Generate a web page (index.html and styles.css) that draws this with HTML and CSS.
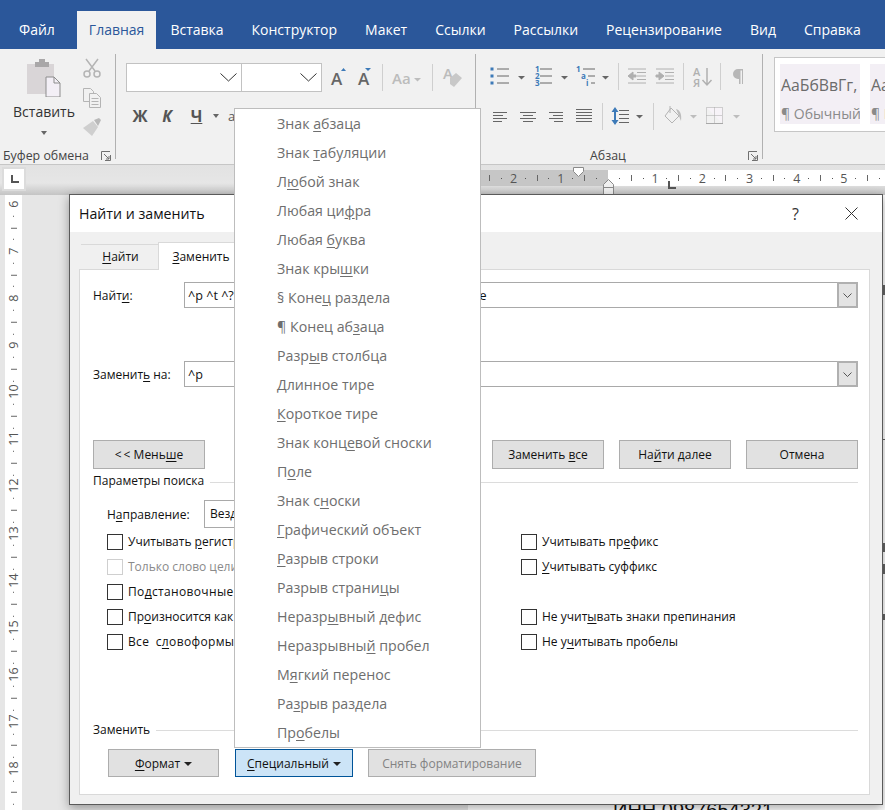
FILE: index.html
```html
<!DOCTYPE html>
<html lang="ru">
<head>
    <meta charset="UTF-8">
    <meta name="viewport" content="width=device-width, initial-scale=1.0">
    <title>Найти и заменить</title>
    <link rel="stylesheet" href="styles.css">
</head>
<body>
    <div class="app">
        <!-- верхние вкладки -->
        <nav class="tabs">
            <span class="tab tab-file">Файл</span>
            <span class="tab active">Главная</span>
            <span class="tab">Вставка</span>
            <span class="tab">Конструктор</span>
            <span class="tab">Макет</span>
            <span class="tab">Ссылки</span>
            <span class="tab">Рассылки</span>
            <span class="tab">Рецензирование</span>
            <span class="tab">Вид</span>
            <span class="tab">Справка</span>
        </nav>

        <!-- лента -->
        <section class="ribbon">
            <div class="group group-clip">
                <div class="clip-body">
                    <div class="paste">
                        <svg width="34" height="38" viewBox="0 0 34 38">
                            <path d="M0 5h27v30H0z" fill="#d9d5d7"/>
                            <path d="M8 3h4V0h6v3h4v5H8z" fill="#a9a7a8"/>
                            <path d="M19 18h8l6 6v14H19z" fill="#f3eff6" stroke="#8d8d8d"/>
                            <path d="M27 18v6h6" fill="none" stroke="#8d8d8d"/>
                        </svg>
                        <span class="paste-label">Вставить</span>
                        <span class="caret"></span>
                    </div>
                    <div class="clip-tools">
                        <svg width="18" height="20" viewBox="0 0 18 20" fill="none" stroke="#b4b4b4" stroke-width="1.5">
                            <path d="M3 1l9 12M15 1L6 13"/>
                            <circle cx="4" cy="16" r="3"/>
                            <circle cx="14" cy="16" r="3"/>
                        </svg>
                        <svg width="18" height="20" viewBox="0 0 18 20" fill="#f1f1f1" stroke="#b4b4b4">
                            <path d="M.5.5h7l3 3v10H.5z"/>
                            <path d="M6.5 5.5h7l4 4v10h-11z"/>
                            <path d="M8.5 10.500h7M8.500 13.500h7M8.500 16.500h7"/>
                        </svg>
                        <svg width="18" height="18" viewBox="0 0 18 18">
                            <path d="M11 2l5-2 2 2-3 6z" fill="#b9b9b9"/>
                            <path d="M10 3l5 6-6 9-9-8z" fill="#cfcfcf"/>
                        </svg>
                    </div>
                </div>
                <div class="group-label">
                    <span>Буфер обмена</span>
                    <svg class="launcher" width="10" height="10" viewBox="0 0 10 10" fill="none" stroke="#707070"><path d="M.5 9V.5H9M9.500 4v5.500H4M3 3l5 5M8 5v3H5"/></svg>
                </div>
            </div>

            <div class="group group-font">
                <div class="row row-font">
                    <div class="combo combo-name"><svg width="17" height="9" viewBox="0 0 17 9" fill="none" stroke="#333"><path d="M.5.500l8 7.500 8-7.500"/></svg></div>
                    <div class="combo combo-size"><svg width="17" height="9" viewBox="0 0 17 9" fill="none" stroke="#333"><path d="M.5.500l8 7.500 8-7.500"/></svg></div>
                    <svg width="30" height="29" viewBox="0 0 30 29">
                        <text x="9" y="22" class="ico-a">A</text>
                        <path d="M19 8l2.500-3 2.500 3z" fill="#3d7ab8"/>
                    </svg>
                    <svg width="30" height="29" viewBox="0 0 30 29">
                        <text x="6" y="22" class="ico-a">A</text>
                        <path d="M13 5h6l-3 3z" fill="#3d7ab8"/>
                    </svg>
                    <span class="vsep"></span>
                    <svg width="49" height="29" viewBox="0 0 49 29">
                        <text x="9" y="21" class="ico-aa">Aa</text>
                        <path d="M31 15h7l-3.500 3.500z" fill="#bdbdbd"/>
                    </svg>
                    <span class="vsep"></span>
                    <svg width="40" height="29" viewBox="0 0 40 29">
                        <text x="10" y="16" class="ico-aa">A</text>
                        <path d="M17 15l6-5 6 5-8 9-4-3z" fill="#c8c8c8"/>
                    </svg>
                </div>
                <div class="row row-second">
                    <span class="fmt fmt-b">Ж</span>
                    <span class="fmt fmt-i">К</span>
                    <span class="fmt fmt-u">Ч</span>
                    <span class="caret"></span>
                    <span class="fmt-more">а</span>
                </div>
            </div>

            <div class="group group-para">
                <div class="row row-para">
                    <svg width="46" height="28" viewBox="0 0 46 28">
                        <g fill="#3d7ab8"><rect x="4.500" y="5.500" width="3" height="3"/><rect x="4.500" y="12.500" width="3" height="3"/><rect x="4.500" y="19.500" width="3" height="3"/></g>
                        <path d="M11 7h12M11 14h12M11 21h12" stroke="#666"/>
                        <path d="M32 14h7l-3.500 3.500z" fill="#666"/>
                    </svg>
                    <svg width="40" height="28" viewBox="0 0 40 28">
                        <g class="ico-num"><text x="3" y="10">1</text><text x="3" y="17">2</text><text x="3" y="24">3</text></g>
                        <path d="M8 7h12M8 14h12M8 21h12" stroke="#666"/>
                        <path d="M29 14h7l-3.500 3.500z" fill="#666"/>
                    </svg>
                    <svg width="46" height="28" viewBox="0 0 46 28">
                        <g class="ico-num"><text x="4" y="10">1</text><text x="9" y="17">a</text><text x="14" y="24">i</text></g>
                        <path d="M11 7h12M16 14h7M19 21h4" stroke="#666"/>
                        <path d="M30 14h7l-3.500 3.500z" fill="#666"/>
                    </svg>
                    <span class="vsep"></span>
                    <svg width="32" height="28" viewBox="0 0 32 28" stroke="#b0b0b0">
                        <path d="M9 7h18M18 10.500h9M18 14h9M18 17.500h9M9 21h18" fill="none"/>
                        <path d="M9 14l5-4v3h3v2h-3v3z" fill="#b0b0b0"/>
                    </svg>
                    <svg width="32" height="28" viewBox="0 0 32 28" stroke="#b0b0b0">
                        <path d="M5 7h18M14 10.500h9M14 14h9M14 17.500h9M5 21h18" fill="none"/>
                        <path d="M13 14l-5-4v3H5v2h3v3z" fill="#b0b0b0"/>
                    </svg>
                    <span class="vsep"></span>
                    <svg width="36" height="28" viewBox="0 0 36 28">
                        <text x="9" y="14" class="ico-sort">А</text>
                        <text x="9" y="25" class="ico-sort">Я</text>
                        <path d="M23 6v17M18.500 18l4.500 5 4.500-5" fill="none" stroke="#b0b0b0" stroke-width="1.500"/>
                    </svg>
                    <span class="vsep"></span>
                    <svg width="28" height="28" viewBox="0 0 28 28">
                        <path d="M22 7H17a5 5 0 0 0 0 10h1v5h1.500V8.500H21V22h1z" fill="#b7b7b7"/>
                    </svg>
                </div>
                <div class="row row-para-2">
                    <svg width="27" height="24" viewBox="0 0 27 24" stroke="#666"><path d="M7 8.500h14M7 11.500h10M7 14.500h14M7 17.500h9"/></svg>
                    <svg width="30" height="24" viewBox="0 0 30 24" stroke="#666"><path d="M7 8.500h16M10 11.500h10M7 14.500h16M10 17.500h10"/></svg>
                    <svg width="27" height="24" viewBox="0 0 27 24" stroke="#666"><path d="M6 8.500h14M10 11.500h10M6 14.500h14M11 17.500h9"/></svg>
                    <svg width="32" height="24" viewBox="0 0 32 24" stroke="#666"><path d="M6 5.500h16M6 8.500h16M6 11.500h16M6 14.500h16M6 17.500h16"/></svg>
                    <span class="vsep"></span>
                    <svg width="50" height="24" viewBox="0 0 50 24">
                        <path d="M12 3l3.500 5h-2.500v8h2.500L12 21l-3.500-5H11V8H8.500z" fill="#3d7ab8"/>
                        <path d="M16 6.500h10M16 10.500h10M16 14.500h10M16 18.500h10" stroke="#666"/>
                        <path d="M33 11h7l-3.500 3.500z" fill="#666"/>
                    </svg>
                    <span class="vsep"></span>
                    <svg width="48" height="24" viewBox="0 0 48 24">
                        <path d="M17 4l8 8-7 7-7-7z" fill="#f1f1f1" stroke="#b4b4b4"/>
                        <path d="M16 2v7" stroke="#b4b4b4"/>
                        <path d="M22 5c4 1 6 5 5 12l-2-5z" fill="#bdbdbd"/>
                        <path d="M36 11h7l-3.500 3.500z" fill="#bdbdbd"/>
                    </svg>
                    <svg width="43" height="24" viewBox="0 0 43 24">
                        <path d="M4.500 3.500h16v16M4.500 19.500v-16M12.500 3.500v16M4.500 11.500h16" fill="#f7f3f8" stroke="#a8a8a8" stroke-dasharray="1 1"/>
                        <path d="M4 19.500h17" stroke="#a8a8a8"/>
                        <path d="M31 11h7l-3.500 3.500z" fill="#bdbdbd"/>
                    </svg>
                </div>
                <div class="group-label label-para">
                    <span>Абзац</span>
                    <svg class="launcher" width="10" height="10" viewBox="0 0 10 10" fill="none" stroke="#707070"><path d="M.5 9V.5H9M9.500 4v5.500H4M3 3l5 5M8 5v3H5"/></svg>
                </div>
            </div>

            <div class="styles">
                <div class="style-item">
                    <span class="style-sample">АаБбВвГг,</span>
                    <span class="style-name">¶ Обычный</span>
                </div>
                <div class="style-item">
                    <span class="style-sample">АаБбВвГг,</span>
                    <span class="style-name">¶ Без инт</span>
                </div>
            </div>
        </section>

        <!-- линейка -->
        <div class="ruler-bar">
            <span class="corner"><svg width="8" height="8" viewBox="0 0 8 8"><path d="M0 0h2v6h6v2H0z" fill="#555"/></svg></span>
            <div class="h-ruler">
                <i class="t"></i><i class="d"></i><b>2</b><i class="d"></i><i class="t"></i><i class="d"></i><b>1</b><i class="d"></i><i class="t"></i><i class="d"></i><b></b><i class="d"></i><i class="t"></i><i class="d"></i><b>1</b><i class="d"></i><i class="t"></i><i class="d"></i><b>2</b><i class="d"></i><i class="t"></i><i class="d"></i><b>3</b><i class="d"></i><i class="t"></i><i class="d"></i><b>4</b><i class="d"></i><i class="t"></i><i class="d"></i><b>5</b><i class="d"></i><i class="t"></i><i class="d"></i>
                <svg class="mark mark-first" width="11" height="10" viewBox="0 0 11 10"><path d="M.5.500h10v4l-5 5-5-5z" fill="#fff" stroke="#8a8a8a"/></svg>
                <svg class="mark mark-left" width="11" height="16" viewBox="0 0 11 16"><path d="M.5 15.500v-10l5-5 5 5v10zM.5 8.500h10" fill="#f1f1f1" stroke="#8a8a8a"/></svg>
                <svg class="mark mark-tab" width="8" height="8" viewBox="0 0 8 8"><path d="M0 0h2v6h6v2H0z" fill="#555"/></svg>
            </div>
        </div>

        <!-- документ -->
        <div class="workspace">
            <div class="v-ruler">
                <b>6</b><i class="d"></i><i class="t"></i><i class="d"></i><b>7</b><i class="d"></i><i class="t"></i><i class="d"></i><b>8</b><i class="d"></i><i class="t"></i><i class="d"></i><b>9</b><i class="d"></i><i class="t"></i><i class="d"></i><b>10</b><i class="d"></i><i class="t"></i><i class="d"></i><b>11</b><i class="d"></i><i class="t"></i><i class="d"></i><b>12</b><i class="d"></i><i class="t"></i><i class="d"></i><b>13</b><i class="d"></i><i class="t"></i><i class="d"></i><b>14</b><i class="d"></i><i class="t"></i><i class="d"></i><b>15</b><i class="d"></i><i class="t"></i><i class="d"></i><b>16</b><i class="d"></i><i class="t"></i><i class="d"></i><b>17</b><i class="d"></i><i class="t"></i><i class="d"></i><b>18</b><i class="d"></i><i class="t"></i><i class="d"></i>
            </div>
            <div class="page">
                <span class="edge edge-a"></span>
                <span class="edge edge-b"></span>
                <span class="edge edge-c"></span>
                <span class="edge edge-d"></span>
                <span class="edge edge-e"></span>
                <p class="page-text">ИНН 0987654321</p>
            </div>
        </div>
    </div>

    <!-- окно диалога -->
    <div class="dialog">
        <header class="dialog-title">
            <span>Найти и заменить</span>
            <span class="help">?</span>
            <svg class="close" width="13" height="13" viewBox="0 0 13 13" stroke="#333"><path d="M.5.500l12 12M12.500.500l-12 12"/></svg>
        </header>
        <div class="dialog-tabs">
            <span class="dlg-tab"><u>Н</u>айти</span>
            <span class="dlg-tab current"><u>З</u>аменить</span>
        </div>
        <div class="panel">
            <div class="field">
                <label>Найт<u>и</u>:</label>
                <div class="input">
                    <span>^p ^t ^? ^# ^$ ^^ ^% ^v ^n ^+ ^= ^d ^f ^g ^m ^~ ^e</span>
                    <span class="drop"><svg width="9" height="5" viewBox="0 0 9 5" fill="none" stroke="#555"><path d="M.5.500l4 4 4-4"/></svg></span>
                </div>
            </div>
            <div class="field field-next">
                <label>Заменит<u>ь</u> на:</label>
                <div class="input">
                    <span>^p</span>
                    <span class="drop"><svg width="9" height="5" viewBox="0 0 9 5" fill="none" stroke="#555"><path d="M.5.500l4 4 4-4"/></svg></span>
                </div>
            </div>
            <div class="actions">
                <button class="btn">&lt;&thinsp;&lt; Мень<u>ш</u>е</button>
                <button class="btn btn-replace">Заменить</button>
                <button class="btn">Заменить <u>в</u>се</button>
                <button class="btn">На<u>й</u>ти далее</button>
                <button class="btn">Отмена</button>
            </div>
            <div class="legend legend-search"><span>Параметры поиска</span><i></i></div>
            <div class="direction">
                <label>Н<u>а</u>правление:</label>
                <div class="select">Везде</div>
            </div>
            <div class="options">
                <label class="opt"><span class="check"></span><span>Учитывать <u>р</u>егистр</span></label>
                <label class="opt"><span class="check"></span><span>Учитывать пр<u>е</u>фикс</span></label>
                <label class="opt off"><span class="check"></span><span>Только слово целиком</span></label>
                <label class="opt"><span class="check"></span><span><u>У</u>читывать суффикс</span></label>
                <label class="opt"><span class="check"></span><span class="opt-wide">По<u>д</u>становочные знаки</span></label>
                <span></span>
                <label class="opt"><span class="check"></span><span>Пр<u>о</u>износится как</span></label>
                <label class="opt"><span class="check"></span><span>Не учит<u>ы</u>вать знаки препинания</span></label>
                <label class="opt"><span class="check"></span><span class="opt-wide">Все с<u>л</u>овоформы</span></label>
                <label class="opt"><span class="check"></span><span>Не у<u>ч</u>итывать пробелы</span></label>
            </div>
            <div class="legend legend-replace"><span>Заменить</span><i></i></div>
            <div class="bottom-btns">
                <button class="btn btn-format"><u>Ф</u>ормат<span class="caret dark"></span></button>
                <button class="btn btn-special"><u>С</u>пециальный<span class="caret dark"></span></button>
                <button class="btn btn-clear">Снять форматирование</button>
            </div>
        </div>
    </div>

    <!-- выпадающее меню -->
    <ul class="menu">
        <li>Знак <u>а</u>бзаца</li>
        <li>Знак <u>т</u>абуляции</li>
        <li>Л<u>ю</u>бой знак</li>
        <li>Любая ци<u>ф</u>ра</li>
        <li>Любая <u>б</u>уква</li>
        <li>Знак кры<u>ш</u>ки</li>
        <li>§ Коне<u>ц</u> раздела</li>
        <li>¶ Конец аб<u>з</u>аца</li>
        <li>Разр<u>ы</u>в столбца</li>
        <li><u>Д</u>линное тире</li>
        <li><u>К</u>ороткое тире</li>
        <li>Знак конц<u>е</u>вой сноски</li>
        <li>П<u>о</u>ле</li>
        <li>Знак с<u>н</u>оски</li>
        <li><u>Г</u>рафический объект</li>
        <li><u>Р</u>азрыв строки</li>
        <li>Разрыв страни<u>ц</u>ы</li>
        <li>Неразр<u>ы</u>вный дефис</li>
        <li>Неразрывны<u>й</u> пробел</li>
        <li>М<u>я</u>гкий перенос</li>
        <li>Ра<u>з</u>рыв раздела</li>
        <li>Пр<u>о</u>белы</li>
    </ul>
</body>
</html>
```

FILE: styles.css
```css
* { box-sizing: border-box; }
html, body { margin: 0; height: 100%; }
body { width: 885px; height: 810px; overflow: hidden; position: relative; font-family: "Open Sans", sans-serif; background-color: #e6e6e6; color: #222; }
svg { display: block; flex: none; }
u { text-underline-offset: 2px; }

/* tabs */
.tabs { display: flex; height: 49px; padding: 11px 0 0 5px; background-color: #2b579a; }
.tab { padding: 0 14px; height: 38px; line-height: 38px; font-size: 14px; color: #fff; white-space: nowrap; }
.tab-file { margin-right: 8px; }
.tab.active { background-color: #f1f1f1; color: #2b579a; padding: 0 12px; }

/* ribbon */
.ribbon { display: flex; height: 116px; padding-top: 5px; background-color: #f1f1f1; border-bottom: 1px solid #c6c6c6; overflow: hidden; }
.group { position: relative; height: 105px; border-right: 1px solid #b1b1b1; flex: none; }
.group-clip { width: 116px; display: flex; flex-direction: column; }
.group-font { width: 360px; padding-left: 10px; }
.group-para { width: 287px; padding-left: 10px; }
.clip-body { display: flex; flex: 1; }
.paste { width: 83px; padding: 5px 0 0 5px; display: flex; flex-direction: column; align-items: center; }
.paste-label { margin-top: 5px; font-size: 14px; line-height: 20px; color: #333; }
.paste .caret { margin-top: 9px; }
.clip-tools { padding-top: 4px; display: flex; flex-direction: column; gap: 10px; }
.group-label { display: flex; justify-content: space-between; align-items: center; height: 16px; margin-bottom: -4px; padding: 0 4px 0 3px; font-size: 12.4px; color: #444; }
.label-para { position: absolute; left: 0; right: 0; bottom: -4px; margin: 0; padding: 0 4px 0 114px; }
.launcher { margin-top: 2px; }
.caret { display: inline-block; width: 0; height: 0; border-top: 4px solid #666; border-left: 3.5px solid transparent; border-right: 3.5px solid transparent; flex: none; }
.caret.dark { border-top: 4.5px solid #222; border-left-width: 4.5px; border-right-width: 4.5px; margin-left: 4px; vertical-align: 2px; }

.row { display: flex; align-items: center; }
.row-font { height: 29px; margin-top: 9px; }
.row-second { height: 24px; margin-top: 12px; }
.combo { height: 29px; background-color: #fff; border: 1px solid #c2c2c2; display: flex; align-items: center; justify-content: flex-end; padding-right: 4px; }
.combo-name { width: 116px; }
.combo-size { width: 80px; border-left: 0; }
.vsep { width: 1px; height: 27px; background-color: #cfcfcf; flex: none; }
.row-para { height: 28px; margin-top: 8px; }
.row-para-2 { height: 24px; margin-top: 14px; }
.ico-a { font: 600 17px "Open Sans", sans-serif; fill: #666; }
.ico-aa { font: 600 15px "Open Sans", sans-serif; fill: #bcbcbc; }
.ico-num { font: 700 8px "Open Sans", sans-serif; fill: #3d7ab8; }
.ico-sort { font: 600 11px "Open Sans", sans-serif; fill: #b0b0b0; }
.fmt { font-size: 16px; font-weight: 700; color: #555; text-align: center; }
.fmt-b { width: 28px; }
.fmt-i { width: 26px; font-style: italic; }
.fmt-u { width: 33px; text-decoration: underline; }
.fmt-more { margin-left: 9px; font-size: 13px; color: #555; }

.styles { display: flex; gap: 10px; width: 140px; height: 75px; margin: 3px 0 0 11px; padding: 6px 5px; background-color: #fff; border: 1px solid #c6c6c6; flex: none; }
.style-item { width: 80px; flex: none; height: 60px; padding-left: 1px; background-color: #f3eff5; display: flex; flex-direction: column; overflow: hidden; white-space: nowrap; color: #6b6b6b; }
.style-sample { margin-top: 11px; font-size: 15.8px; line-height: 20px; }
.style-name { margin-top: 9px; font-size: 14px; line-height: 20px; color: #8a8a8a; }

/* rulers */
.ruler-bar { display: flex; height: 30px; padding: 3px 0 0 3px; background: linear-gradient(#e2e2e2, #e6e6e6 60%, #c4c4c4); }
.corner { width: 22px; height: 22px; background-color: #fff; display: flex; padding: 7px 0 0 8px; outline: 2px solid #dcdcdc; outline-offset: -1px; }
.h-ruler { position: relative; display: flex; width: 404px; height: 16px; margin: 2px 0 0 456px; padding-left: 3.1px; background: linear-gradient(90deg, #c6c6c6 127px, #fff 127px); flex: none; }
.h-ruler i, .h-ruler b { width: 11.8px; flex: none; display: flex; align-items: center; justify-content: center; font: 400 12.5px/17px "Open Sans", sans-serif; color: #555; }
.h-ruler .t::before { content: ""; width: 1px; height: 6px; background-color: #666; }
.h-ruler .d::before { content: ""; width: 1px; height: 1px; background-color: #555; }
.mark { position: absolute; }
.mark-first { left: 92px; top: -3px; }
.mark-left { left: 122px; top: 9px; }
.mark-tab { left: 187px; top: 11px; }

.workspace { display: flex; height: 615px; }
.v-ruler { width: 17px; margin-left: 5px; padding-top: 3.1px; background-color: #fff; display: flex; flex-direction: column; align-items: center; overflow: hidden; flex: none; }
.v-ruler i, .v-ruler b { height: 11.78px; flex: none; display: flex; align-items: center; justify-content: center; font: 400 12.5px/17px "Open Sans", sans-serif; color: #555; writing-mode: vertical-rl; transform: rotate(180deg); white-space: nowrap; }
.v-ruler .t::before { content: ""; height: 1px; width: 6px; background-color: #666; }
.v-ruler .d::before { content: ""; height: 1px; width: 1px; background-color: #555; }
.page { width: 417px; margin-left: 446px; padding-top: 90px; background-color: #fff; overflow: hidden; flex: none; }
.edge { display: block; width: 2px; margin-left: 415px; background-color: #666; }
.edge-a { height: 10px; }
.edge-b { height: 1px; margin-top: 144px; }
.edge-c { height: 9px; margin-top: 103px; }
.edge-d { height: 10px; margin-top: 12px; }
.edge-e { height: 6px; margin-top: 40px; }
.page-text { margin: 178px 0 0 145px; font: 20px/24px "Liberation Sans", sans-serif; color: #111; white-space: nowrap; }

/* dialog */
.dialog { position: absolute; left: 69px; top: 194px; width: 814px; height: 611px; background-color: #f0f0f0; border: 1px solid #5a5a5a; box-shadow: 0 3px 10px rgba(0, 0, 0, 0.35); display: flex; flex-direction: column; font-size: 12px; color: #111; }
.dialog-title { display: flex; align-items: center; height: 37px; padding: 0 24px 0 9px; background-color: #fff; font-size: 14.2px; flex: none; }
.dialog-title span:first-child { flex: 1; }
.help { margin-right: 46px; font-size: 16px; color: #333; }
.dialog-tabs { display: flex; align-items: flex-end; height: 37px; padding: 0 0 0 11px; flex: none; }
.dlg-tab { width: 77px; height: 25px; padding-left: 2px; line-height: 24px; text-align: center; border-top: 1px solid #d9d9d9; color: #111; }
.dlg-tab.current { width: 86px; height: 28px; padding-left: 0; line-height: 27px; background-color: #fff; border: 1px solid #d9d9d9; border-bottom: 0; margin-bottom: -1px; position: relative; }
.panel { height: 526px; margin: 0 12px 0 9px; padding: 12px 11px 0 13px; background-color: #fff; border: 1px solid #d9d9d9; }

.field { display: flex; align-items: center; height: 26px; }
.field-next { margin-top: 53px; }
.field label { width: 91px; flex: none; }
.input { flex: 1; height: 26px; display: flex; align-items: center; justify-content: space-between; padding-left: 3px; border: 1px solid #a9a9a9; font-size: 12.6px; background-color: #fff; white-space: nowrap; }
.drop { width: 21px; height: 26px; margin: -1px -1px -1px 0; display: flex; align-items: center; justify-content: center; background-color: #e3e3e3; border: 2px solid #b0b0b0; flex: none; }

.actions { display: flex; gap: 15px; margin-top: 53px; }
.btn { width: 112px; height: 29px; padding: 0; background-color: #e1e1e1; border: 1px solid #adadad; font: 12px "Open Sans", sans-serif; color: #111; white-space: nowrap; }
.btn-replace { margin-left: 145px; }
.legend { display: flex; align-items: center; gap: 6px; height: 16px; }
.legend i { flex: 1; height: 1px; background-color: #dcdcdc; }
.legend-search { margin-top: 3px; }
.legend-search i { margin-top: 4px; }
.legend-replace { margin-top: 62px; }
.legend-replace i { margin-top: 2px; }
.direction { display: flex; align-items: center; margin: 12px 0 0 14px; }
.direction label { width: 97px; }
.select { width: 150px; height: 28px; line-height: 26px; padding-left: 5px; border: 1px solid #a9a9a9; }
.options { display: grid; grid-template-columns: 414px 1fr; grid-auto-rows: 25px; margin: 6px 0 0 14px; }
.opt { display: flex; align-items: flex-start; gap: 5px; line-height: 16px; white-space: nowrap; }
.opt.off { color: #8a8a8a; }
.opt-wide { letter-spacing: 0.35px; word-spacing: 3px; }
.check { width: 16px; height: 16px; border: 1px solid #333; background-color: #fff; flex: none; }
.opt.off .check { border-color: #cfcfcf; }
.bottom-btns { display: flex; gap: 15px; margin: 12px 0 0 15px; }
.bottom-btns .btn { height: 28px; }
.btn-format { width: 111px; }
.btn-special { width: 118px; margin-left: 1px; background-color: #cce4f7; border-color: #005499; }
.btn-clear { width: 168px; color: #838383; }

/* menu */
.menu { position: absolute; left: 234px; top: 108px; width: 247px; margin: 0; padding: 0; list-style: none; background-color: #fff; border: 1px solid #bdbdbd; }
.menu li { height: 29px; line-height: 30px; padding-left: 42px; font-size: 14.2px; color: #6e6e6e; white-space: nowrap; }
```
